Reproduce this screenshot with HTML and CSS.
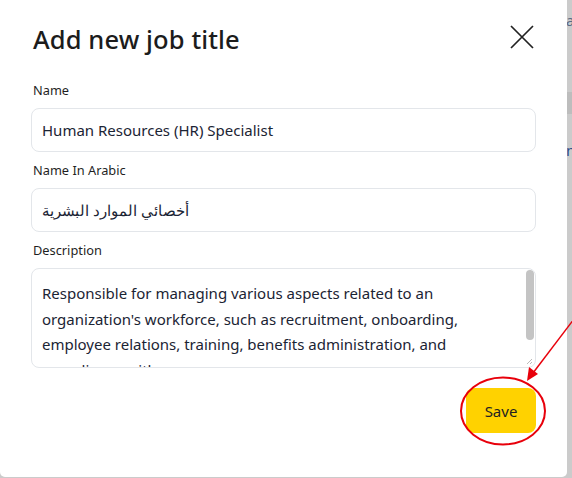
FILE: index.html
```html
<!DOCTYPE html>
<html lang="en">
<head>
<meta charset="utf-8">
<link rel="stylesheet" href="styles.css">
</head>
<body>
<div class="backdrop">
  <span class="bg-a">a</span>
  <span class="bg-n">n</span>
  <span class="bg-band"></span>
</div>
<div class="modal">
  <div class="header">
    <h1 class="title">Add new job title</h1>
    <button class="close" aria-label="Close">
      <svg width="26" height="26" viewBox="0 0 26 26"><path d="M2 2 L24 24 M24 2 L2 24" stroke="#222" stroke-width="1.7" fill="none"/></svg>
    </button>
  </div>
  <div class="form">
    <label class="label">Name</label>
    <div class="input">Human Resources (HR) Specialist</div>
    <label class="label">Name In Arabic</label>
    <div class="input"><span class="ar" dir="rtl">أخصائي الموارد البشرية</span></div>
    <label class="label">Description</label>
    <div class="textarea">
      <div class="ta-text">Responsible for managing various aspects related to an organization's workforce, such as recruitment, onboarding, employee relations, training, benefits administration, and compliance with...</div>
      <div class="scroll"><div class="thumb"></div></div>
      <svg class="grip" width="8" height="8" viewBox="0 0 8 8"><path d="M7 2 L2 7 M7 5 L5 7" stroke="#bbb" stroke-width="1"/></svg>
    </div>
    <div class="actions">
      <button class="save">Save</button>
    </div>
  </div>
  <svg class="annot" width="572" height="478" viewBox="0 0 572 478">
    <ellipse cx="503" cy="411" rx="42" ry="33.5" fill="none" stroke="#e8000b" stroke-width="2"/>
    <line x1="574" y1="319" x2="533" y2="373" stroke="#e8000b" stroke-width="1.5"/>
    <polygon points="527,381 529,367 538,374" fill="#e8000b"/>
  </svg>
</div>
</body>
</html>
```
FILE: styles.css
```css
* { box-sizing: border-box; }
html, body { margin: 0; padding: 0; }
body {
  width: 572px;
  height: 478px;
  background: #cbcbcb;
  font-family: "Noto Sans", "Open Sans", sans-serif;
  overflow: hidden;
  position: relative;
}
.backdrop { position: absolute; right: 0; top: 0; width: 6px; height: 478px; overflow: hidden; }
.bg-a { position: absolute; left: 0; top: 10px; font-size: 15px; color: #5a6a85; }
.bg-n { position: absolute; left: 0; top: 140px; font-size: 15px; color: #2f4f8a; }
.bg-band { position: absolute; left: 0; top: 92px; width: 6px; height: 22px; background: #bdbdbd; }
.modal {
  position: relative;
  width: 567px;
  height: 477px;
  background: #fff;
  border-radius: 0 0 5px 5px;
  padding: 0 31px 0 31px;
}
.header {
  display: flex;
  justify-content: space-between;
  align-items: center;
  height: 78px;
  padding-left: 2px;
}
.title {
  margin: 0;
  font-size: 25.5px;
  font-weight: 500;
  color: #1c1c1c;
  letter-spacing: 0.1px;
}
.close {
  background: none;
  border: 0;
  padding: 0;
  margin-right: 1px;
  margin-top: -4px;
  width: 26px;
  height: 26px;
  display: flex;
}
.form { display: flex; flex-direction: column; width: 505px; padding-top: 2px; }
.label {
  font-size: 12.8px;
  color: #1f1f1f;
  padding-left: 2px;
  height: 20px;
  line-height: 20px;
}
.input {
  margin-top: 8px;
  margin-bottom: 8px;
  height: 44px;
  border: 1px solid #e3e6ea;
  border-radius: 8px;
  display: flex;
  align-items: center;
  padding: 0 10px;
  font-size: 15px;
  color: #1b2434;
}
.ar { font-size: 15px; }
.textarea {
  position: relative;
  margin-top: 8px;
  height: 100px;
  border: 1px solid #e3e6ea;
  border-radius: 8px;
  padding: 12px 22px 0 10px;
  overflow: hidden;
}
.ta-text {
  font-size: 15px;
  line-height: 25.6px;
  color: #1b2434;
}
.scroll {
  position: absolute;
  right: 1px;
  top: 1px;
  width: 8px;
  height: 90px;
}
.thumb {
  width: 8px;
  height: 70px;
  background: #c4c4c4;
  border-radius: 4px;
}
.grip { position: absolute; right: 2px; bottom: 2px; }
.actions {
  display: flex;
  justify-content: flex-end;
  margin-top: 20px;
}
.save {
  width: 70px;
  height: 45px;
  background: #ffd200;
  border: 0;
  border-radius: 8px;
  font-family: inherit;
  font-size: 15px;
  color: #222;
}
.annot { position: absolute; left: 0; top: 0; pointer-events: none; }
```
